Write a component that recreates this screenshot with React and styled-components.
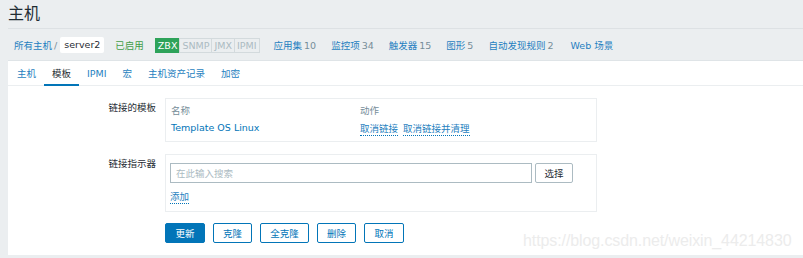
import React from "react";
import styled, { createGlobalStyle } from "styled-components";

const Global = createGlobalStyle`
  html, body { margin: 0; padding: 0; }
  body {
    background: #ebeef0;
    font-family: "DejaVu Sans", "Noto Sans CJK SC", sans-serif;
    font-size: 9.5px;
    color: #1f2c33;
    width: 803px;
    height: 258px;
    overflow: hidden;
  }
`;

const Page = styled.div`
  position: relative;
  height: 258px;
`;

const Header = styled.div`
  height: 28px;
  margin-left: 8px;
  border-bottom: 1px solid #dde1e4;
  display: flex;
  align-items: center;
`;

const Title = styled.h1`
  margin: 0;
  font-size: 16px;
  font-weight: normal;
  color: #1f2c33;
  line-height: 1;
  margin-top: -1px;
`;

const Nav = styled.div`
  height: 31px;
  display: flex;
  align-items: center;
  padding-left: 14px;
  padding-top: 1px;
  box-sizing: border-box;
`;

const Crumb = styled.a`
  color: #1f7fc0;
  text-decoration: none;
`;

const Sep = styled.span`
  color: #768d99;
  margin: 0 3px 0 2px;
`;

const Current = styled.span`
  background: #fff;
  border-radius: 2px;
  padding: 0 4px;
  height: 16px;
  line-height: 16px;
  color: #1f2c33;
`;

const Status = styled.span`
  color: #429e47;
  margin-left: 11px;
`;

const Badges = styled.div`
  display: flex;
  margin-left: 11px;
  margin-right: 14px;
`;

const Badge = styled.span`
  height: 13px;
  line-height: 13px;
  padding: 0 2px;
  border: 1px solid ${(p) => (p.$on ? "#2ea35a" : "#d3dadd")};
  background: ${(p) => (p.$on ? "#2ea35a" : "#ebeef0")};
  color: ${(p) => (p.$on ? "#fff" : "#acbbc2")};
  & + & { margin-left: -1px; }
`;

const NavLink = styled.a`
  color: #1f7fc0;
  text-decoration: none;
  margin-left: ${(p) => p.$gap ?? 15}px;
  white-space: nowrap;
`;

const Count = styled.span`
  color: #768d99;
  margin-left: 2px;
`;

const Panel = styled.div`
  margin-left: 8px;
  background: #fff;
  border-top: 1px solid #dfe4e7;
  height: 194px;
`;

const Tabs = styled.div`
  display: flex;
  height: 24px;
  border-bottom: 1px solid #ebeef0;
  padding-left: 1px;
`;

const Tab = styled.a`
  padding: 0 8px;
  display: flex;
  align-items: center;
  color: ${(p) => (p.$active ? "#1f2c33" : "#1f7fc0")};
  text-decoration: none;
  border-bottom: 2px solid ${(p) => (p.$active ? "#0275b8" : "transparent")};
  margin-bottom: -1px;
  padding-top: 1px;
`;

const Form = styled.div`
  display: grid;
  grid-template-columns: 148px 432px;
  column-gap: 9px;
  row-gap: 12px;
  padding-top: 12px;
`;

const Label = styled.div`
  text-align: right;
  padding-top: ${(p) => p.$top || 4}px;
`;

const Box = styled.div`
  border: 1px solid #ebeef0;
  padding: ${(p) => p.$pad || "5px"};
  box-sizing: border-box;
  height: ${(p) => p.$h}px;
`;

const Table = styled.div`
  display: grid;
  grid-template-columns: 189px 1fr;
  grid-template-rows: 17px 19px;
  align-items: center;
`;

const Th = styled.div`
  color: #768d99;
`;

const Link = styled.a`
  color: #0275b8;
  text-decoration: none;
`;

const DotLink = styled.a`
  color: #1f7fc0;
  text-decoration: none;
  border-bottom: 1px dotted #0275b8;
  padding-bottom: 1px;
  & + & { margin-left: 5px; }
`;

const InputRow = styled.div`
  display: flex;
  gap: 3px;
`;

const Input = styled.div`
  width: 362px;
  height: 20px;
  box-sizing: border-box;
  border: 1px solid #acbbc2;
  color: #acbbc2;
  padding-left: 5px;
  display: flex;
  align-items: center;
`;

const GrayButton = styled.button`
  width: 38px;
  height: 20px;
  border: 1px solid #acbbc2;
  background: #fff;
  border-radius: 2px;
  font: inherit;
  color: #1f2c33;
  padding: 0;
`;

const AddRow = styled.div`
  margin-top: 6px;
`;

const Buttons = styled.div`
  grid-column: 2;
  display: flex;
  gap: 8px;
  margin-top: -1px;
`;

const Button = styled.button`
  height: 20px;
  width: ${(p) => p.$w}px;
  border: 1px solid #0275b8;
  border-radius: 2px;
  background: ${(p) => (p.$primary ? "#0275b8" : "#fff")};
  color: ${(p) => (p.$primary ? "#fff" : "#0275b8")};
  font: inherit;
  padding: 0;
`;

const Watermark = styled.div`
  position: absolute;
  left: 523px;
  top: 232px;
  font-family: "Liberation Sans", Arial, sans-serif;
  font-size: 16px;
  color: #ececec;
  letter-spacing: -0.1px;
  pointer-events: none;
`;

export default function App() {
  return (
    <Page>
      <Global />
      <Header>
        <Title>主机</Title>
      </Header>
      <Nav>
        <Crumb>所有主机</Crumb>
        <Sep>/</Sep>
        <Current>server2</Current>
        <Status>已启用</Status>
        <Badges>
          <Badge $on>ZBX</Badge>
          <Badge>SNMP</Badge>
          <Badge>JMX</Badge>
          <Badge>IPMI</Badge>
        </Badges>
        <NavLink $gap={0}>应用集<Count>10</Count></NavLink>
        <NavLink>监控项<Count>34</Count></NavLink>
        <NavLink>触发器<Count>15</Count></NavLink>
        <NavLink>图形<Count>5</Count></NavLink>
        <NavLink>自动发现规则<Count>2</Count></NavLink>
        <NavLink $gap={17}>Web 场景</NavLink>
      </Nav>
      <Panel>
        <Tabs>
          <Tab>主机</Tab>
          <Tab $active>模板</Tab>
          <Tab>IPMI</Tab>
          <Tab>宏</Tab>
          <Tab>主机资产记录</Tab>
          <Tab>加密</Tab>
        </Tabs>
        <Form>
          <Label $top={2}>链接的模板</Label>
          <Box $h={44} $pad="2px 5px">
            <Table>
              <Th>名称</Th>
              <Th>动作</Th>
              <Link>Template OS Linux</Link>
              <div>
                <DotLink>取消链接</DotLink>
                <DotLink>取消链接并清理</DotLink>
              </div>
            </Table>
          </Box>
          <Label $top={2}>链接指示器</Label>
          <Box $h={58} $pad="8px 4px">
            <InputRow>
              <Input>在此输入搜索</Input>
              <GrayButton>选择</GrayButton>
            </InputRow>
            <AddRow>
              <DotLink>添加</DotLink>
            </AddRow>
          </Box>
          <Buttons>
            <Button $primary $w={40}>更新</Button>
            <Button $w={39}>克隆</Button>
            <Button $w={49}>全克隆</Button>
            <Button $w={39}>删除</Button>
            <Button $w={40}>取消</Button>
          </Buttons>
        </Form>
      </Panel>
      <Watermark>https://blog.csdn.net/weixin_44214830</Watermark>
    </Page>
  );
}
